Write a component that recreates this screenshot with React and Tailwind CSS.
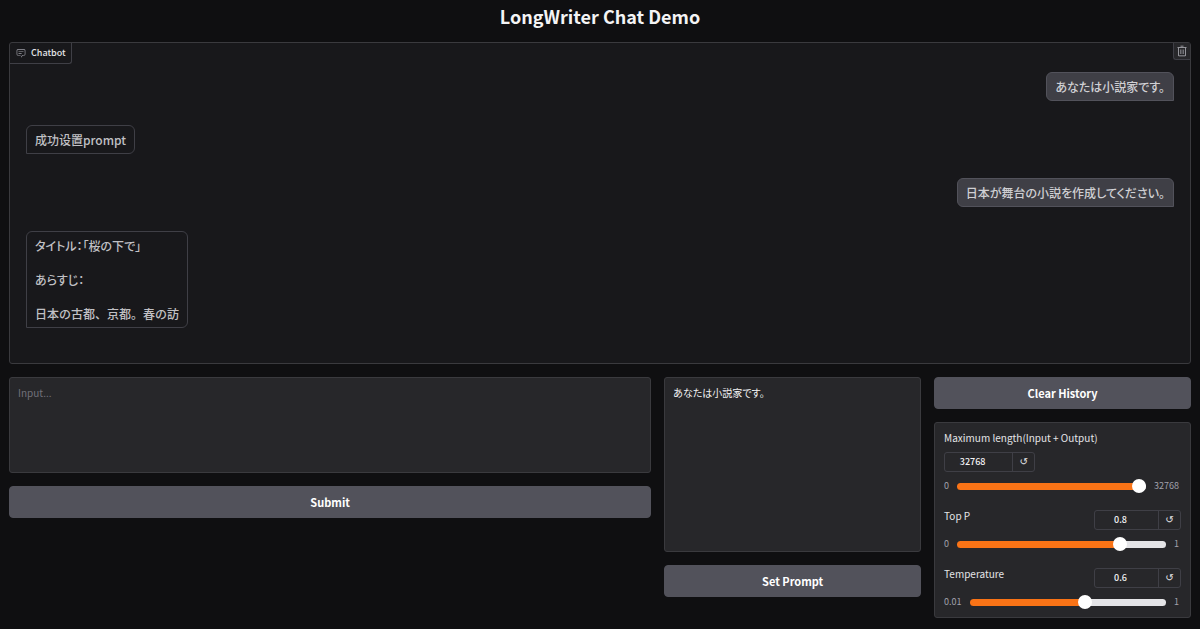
import React, { useState } from "react";

const buttonClass =
  "h-8 w-full shrink-0 rounded-sm border border-[#52525b] bg-[#52525b] text-[11px] leading-4 font-bold text-white hover:bg-[#5f5f69]";

const areaClass =
  "block w-full resize-none rounded-[3px] border border-[#3a3a3e] bg-[#27272a] px-2 py-[7px] leading-4 text-[#f4f4f5] outline-none placeholder:text-[#71717a]";

function ChatIcon() {
  return (
    <svg viewBox="0 0 32 32" className="size-2.5" fill="currentColor" aria-hidden="true">
      <path d="M17.74 30L16 29l4-7h6a2 2 0 0 0 2-2V8a2 2 0 0 0-2-2H6a2 2 0 0 0-2 2v12a2 2 0 0 0 2 2h9v2H6a4 4 0 0 1-4-4V8a4 4 0 0 1 4-4h20a4 4 0 0 1 4 4v12a4 4 0 0 1-4 4h-4.84Z" />
      <path d="M8 10h16v2H8zm0 6h10v2H8z" />
    </svg>
  );
}

function TrashIcon() {
  return (
    <svg viewBox="0 0 32 32" className="size-3" fill="currentColor" aria-hidden="true">
      <path d="M12 12h2v12h-2zm6 0h2v12h-2z" />
      <path d="M4 6v2h2v20a2 2 0 0 0 2 2h16a2 2 0 0 0 2-2V8h2V6zm4 22V8h16v20zm4-26h8v2h-8z" />
    </svg>
  );
}

function Message({ from, children }) {
  return (
    <div
      className={
        from === "user"
          ? "flex flex-col gap-[17px] self-end rounded-md rounded-br-none border border-[#52525b] bg-[#3f3f46] px-2 py-[5px] text-[12px] leading-[17px] font-medium text-[#cfcfd3]"
          : "flex flex-col gap-[17px] self-start rounded-md rounded-bl-none border border-[#3f3f46] bg-[#18181b] px-2 py-[5px] text-[12px] leading-[17px] font-medium text-[#c0c0c4]"
      }
    >
      {children}
    </div>
  );
}

function SliderField({ id, label, min, max, step, initial, stacked }) {
  const [value, setValue] = useState(initial);
  const ratio = (Number(value) - min) / (max - min);
  const fill = `calc(7px + (100% - 14px) * ${ratio})`;
  return (
    <div className="flex flex-col gap-1.5">
      <div
        className={
          stacked
            ? "flex flex-col items-start gap-2"
            : "flex items-start justify-between"
        }
      >
        <label htmlFor={id} className="text-[10px] leading-3 text-[#e4e4e7]">
          {label}
        </label>
        <div
          className={
            stacked
              ? "flex h-5 w-[91px] rounded-[3px] border border-[#3f3f46]"
              : "flex h-5 w-[87px] rounded-[3px] border border-[#3f3f46]"
          }
        >
          <input
            id={id}
            type="number"
            min={min}
            max={max}
            step={step}
            value={value}
            onChange={(e) => setValue(e.target.value)}
            className="min-w-0 flex-1 bg-transparent pr-3 text-center text-[9px] leading-4 font-medium text-[#f4f4f5] outline-none [appearance:textfield] [&::-webkit-inner-spin-button]:appearance-none"
          />
          <button
            type="button"
            aria-label={`Reset ${label}`}
            onClick={() => setValue(initial)}
            className="flex w-[22px] items-center justify-center border-l border-[#3f3f46] font-['DejaVu_Sans',sans-serif] text-[10px] leading-4 text-[#e4e4e7]"
          >
            ↺
          </button>
        </div>
      </div>
      <div className="flex h-4 items-center gap-2 pr-0.5 text-[9px] leading-4 text-[#a1a1aa]">
        <span>{min}</span>
        <input
          type="range"
          aria-label={`${label} slider`}
          min={min}
          max={max}
          step={step}
          value={value}
          onChange={(e) => setValue(e.target.value)}
          style={{
            backgroundImage: `linear-gradient(to right, #f97316 ${fill}, #e4e4e7 ${fill})`,
          }}
          className="h-[7px] min-w-0 flex-1 appearance-none rounded-full [&::-webkit-slider-thumb]:size-3.5 [&::-webkit-slider-thumb]:appearance-none [&::-webkit-slider-thumb]:rounded-full [&::-webkit-slider-thumb]:bg-white"
        />
        <span>{max}</span>
      </div>
    </div>
  );
}

export default function App() {
  const [prompt, setPrompt] = useState("あなたは小説家です。");
  const [text, setText] = useState("");
  return (
    <main
      lang="ja"
      className="min-h-screen bg-[#0f0f11] px-[9px] pb-3 font-['Noto_Sans_CJK_JP',sans-serif] [font-feature-settings:'palt']"
    >
      <h1 className="pt-1 pb-3.5 text-center text-[18px] leading-6 font-bold text-[#f4f4f5]">
        LongWriter Chat Demo
      </h1>

      <section
        aria-label="Chatbot"
        className="relative flex min-h-[322px] flex-col gap-6 rounded-[3px] border border-[#3a3a3e] bg-[#18181b] px-4 pt-[29px] pb-[35px]"
      >
        <div className="absolute top-0 left-0 flex h-[21px] items-center gap-[5px] rounded-br-[3px] border-r border-b border-[#3f3f46] pr-[5px] pl-1.5 text-[9px] leading-4 font-medium text-[#e4e4e7]">
          <span className="text-[#a1a1aa]">
            <ChatIcon />
          </span>
          Chatbot
        </div>
        <button
          type="button"
          aria-label="Clear"
          className="absolute top-0 right-0 flex size-[17px] items-center justify-center rounded-bl-[3px] border-b border-l border-[#3f3f46] bg-[#27272a] text-[#bbbbc1]"
        >
          <TrashIcon />
        </button>
        <Message from="user">
          <p>あなたは小説家です。</p>
        </Message>
        <Message from="bot">
          <p>成功设置prompt</p>
        </Message>
        <Message from="user">
          <p>日本が舞台の小説を作成してください。</p>
        </Message>
        <Message from="bot">
          <p>タイトル：「桜の下で」</p>
          <p>あらすじ：</p>
          <p className="[font-feature-settings:normal]">日本の古都、京都。春の訪</p>
        </Message>
      </section>

      <div className="mt-[13px] grid grid-cols-[5fr_2fr_2fr] items-start gap-[13px]">
        <div className="flex flex-col gap-[13px]">
          <textarea
            aria-label="Input"
            placeholder="Input..."
            value={text}
            onChange={(e) => setText(e.target.value)}
            className={`${areaClass} h-24 text-[10px]`}
          />
          <button type="button" className={buttonClass}>
            Submit
          </button>
        </div>
        <div className="flex flex-col gap-[13px]">
          <textarea
            aria-label="Prompt"
            value={prompt}
            onChange={(e) => setPrompt(e.target.value)}
            className={`${areaClass} h-[175px] text-[10px]`}
          />
          <button type="button" className={buttonClass}>
            Set Prompt
          </button>
        </div>
        <div className="flex flex-col gap-[13px]">
          <button type="button" className={buttonClass}>
            Clear History
          </button>
          <div className="flex flex-col gap-4 rounded-[3px] border border-[#3a3a3e] bg-[#27272a] px-[9px] pt-[9px] pb-[7px]">
            <SliderField
              id="max-length"
              label="Maximum length(Input + Output)"
              min={0}
              max={32768}
              step={1}
              initial={32768}
              stacked
            />
            <SliderField id="top-p" label="Top P" min={0} max={1} step={0.01} initial={0.8} />
            <SliderField
              id="temperature"
              label="Temperature"
              min={0.01}
              max={1}
              step={0.01}
              initial={0.6}
            />
          </div>
        </div>
      </div>
    </main>
  );
}
